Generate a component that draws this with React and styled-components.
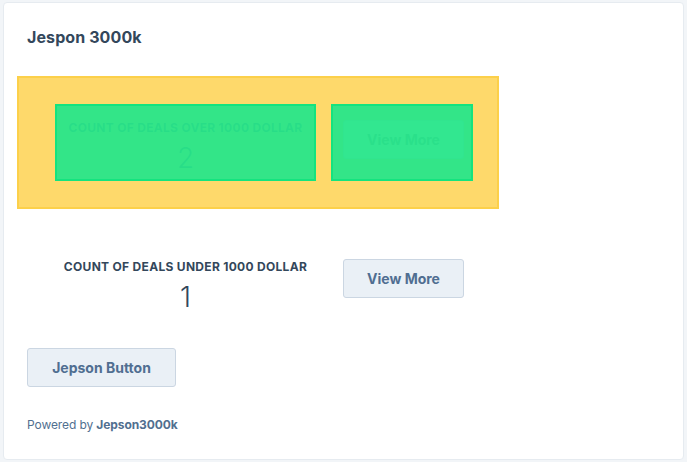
import React from 'react'
import styled, { createGlobalStyle, css } from 'styled-components'

const GlobalStyle = createGlobalStyle`
  html, body {
    margin: 0;
    padding: 0;
    background: #f2f5f8;
  }
  body {
    font-family: Inter, "Noto Sans", Arial, sans-serif;
    color: #33475b;
    padding: 2px 3px 0 3px;
  }
`

const Card = styled.div`
  width: 681px;
  height: 458px;
  box-sizing: border-box;
  background: #fff;
  border: 1px solid #e6ebf0;
  border-radius: 4px;
  padding: 23px 23px 0 23px;
  display: flex;
  flex-direction: column;
`

const Title = styled.h2`
  margin: 0;
  font-size: 16px;
  line-height: 22px;
  font-weight: 700;
  color: #33475b;
  letter-spacing: 0.1px;
`

const Row = styled.div`
  display: flex;
  align-items: flex-start;
  gap: 15px;
  box-sizing: border-box;
  padding: 0 0 0 28px;
  margin-top: ${p => p.$top}px;

  ${p => p.$highlight && css`
    margin-left: -10px;
    width: 482px;
    padding: 26px 24px 26px 36px;
    background: #fed96b;
    border: 2px solid #fcd04a;
  `}
`

const overlay = css`
  &::after {
    content: '';
    position: absolute;
    inset: 0;
    background: rgba(40, 230, 138, 0.95);
    border: 2px solid #14e37f;
    box-sizing: border-box;
  }
`

const StatBox = styled.div`
  position: relative;
  width: 261px;
  height: 77px;
  box-sizing: border-box;
  padding-top: 16px;
  display: flex;
  flex-direction: column;
  align-items: center;
  ${p => p.$highlight && overlay}
`

const StatLabel = styled.div`
  font-size: 12px;
  line-height: 16px;
  font-weight: 700;
  letter-spacing: 0.3px;
  text-transform: uppercase;
  color: #33475b;
`

const StatValue = styled.div`
  font-size: 28px;
  line-height: 34px;
  font-weight: 300;
  color: #33475b;
  margin-top: 5px;
`

const ButtonCell = styled.div`
  position: relative;
  width: 142px;
  height: 77px;
  box-sizing: border-box;
  padding: 16px 9px 0 12px;
  ${p => p.$highlight && overlay}
`

const Button = styled.button`
  height: 39px;
  width: ${p => p.$width}px;
  box-sizing: border-box;
  background: #eaf0f6;
  border: 1px solid #cbd6e2;
  border-radius: 3px;
  font-family: inherit;
  font-size: 14px;
  font-weight: 700;
  color: #506e91;
  padding: 0;
  cursor: pointer;
`

const Footer = styled.div`
  margin-top: ${p => p.$top}px;
`

const Powered = styled.div`
  margin-top: 29px;
  font-size: 12px;
  line-height: 18px;
  color: #516f90;
  letter-spacing: -0.1px;

  b {
    font-weight: 700;
  }
`

const deals = [
  { label: 'Count of deals over 1000 dollar', value: 2, highlight: true, top: 28 },
  { label: 'Count of deals under 1000 dollar', value: 1, highlight: false, top: 34 },
]

const App = () => {
  return (
    <>
      <GlobalStyle />
      <Card>
        <Title>Jespon 3000k</Title>
        {deals.map(d => (
          <Row key={d.label} $highlight={d.highlight} $top={d.top}>
            <StatBox $highlight={d.highlight}>
              <StatLabel>{d.label}</StatLabel>
              <StatValue>{d.value}</StatValue>
            </StatBox>
            <ButtonCell $highlight={d.highlight}>
              <Button $width={121}>View More</Button>
            </ButtonCell>
          </Row>
        ))}
        <Footer $top={28}>
          <Button $width={149}>Jepson Button</Button>
        </Footer>
        <Powered>
          Powered by <b>Jepson3000k</b>
        </Powered>
      </Card>
    </>
  )
}

export default App
